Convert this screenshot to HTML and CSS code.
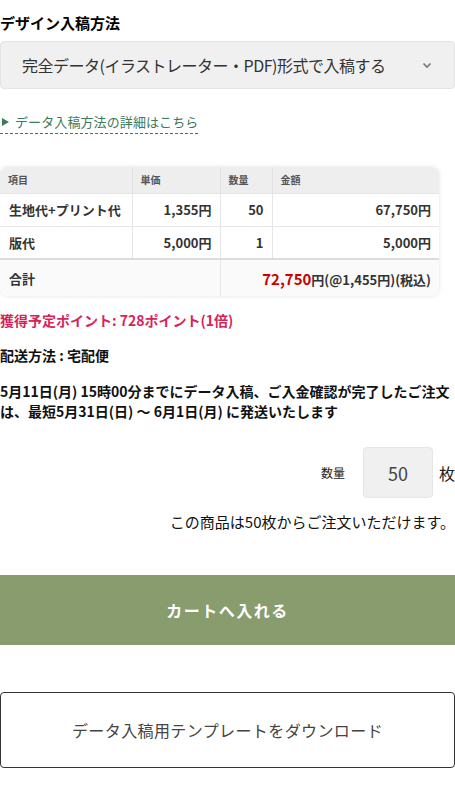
FILE: index.html
```html
<!DOCTYPE html>
<html lang="ja">
<head>
<meta charset="utf-8">
<link rel="stylesheet" href="styles.css">
</head>
<body>
<div class="page">
  <h2 class="title">デザイン入稿方法</h2>
  <div class="select">
    <span class="select-text">完全データ(イラストレーター・PDF)形式で入稿する</span>
    <svg class="chev" width="10" height="7" viewBox="0 0 10 7"><path d="M1.5 1.5 L5 5 L8.5 1.5" fill="none" stroke="#777" stroke-width="1.6"/></svg>
  </div>
  <a class="detail-link"><span class="tri"></span>データ入稿方法の詳細はこちら</a>

  <div class="table-wrap">
    <table class="price">
      <thead>
        <tr><th class="c1">項目</th><th class="c2">単価</th><th class="c3">数量</th><th class="c4">金額</th></tr>
      </thead>
      <tbody>
        <tr><td class="name">生地代+プリント代</td><td class="num">1,355円</td><td class="num">50</td><td class="num">67,750円</td></tr>
        <tr><td class="name">版代</td><td class="num">5,000円</td><td class="num">1</td><td class="num">5,000円</td></tr>
        <tr class="total"><td class="name" colspan="2">合計</td><td class="num" colspan="2"><span class="red">72,750</span>円(@1,455円)(税込)</td></tr>
      </tbody>
    </table>
  </div>

  <p class="points">獲得予定ポイント: 728ポイント(1倍)</p>
  <p class="info">配送方法 : 宅配便</p>
  <p class="info lines">5月11日(月) 15時00分までにデータ入稿、ご入金確認が完了したご注文は、最短5月31日(日) 〜 6月1日(月) に発送いたします</p>

  <div class="qty-row">
    <span class="qty-label">数量</span>
    <div class="qty-box">50</div>
    <span class="qty-unit">枚</span>
  </div>
  <p class="min-note">この商品は50枚からご注文いただけます。</p>

  <button class="cart">カートへ入れる</button>
  <button class="download">データ入稿用テンプレートをダウンロード</button>
</div>
</body>
</html>
```
FILE: styles.css
```css
* { box-sizing: border-box; }
html, body { margin: 0; padding: 0; background: #fff; }
body {
  font-family: "Noto Sans CJK JP", "Liberation Sans", sans-serif;
  color: #111;
  width: 455px;
}
.page { padding: 0; }
.title {
  margin: 0;
  padding-top: 12px;
  font-size: 15px;
  font-weight: 700;
  line-height: 22px;
  color: #000;
}
.select {
  margin-top: 7px;
  height: 48px;
  width: 455px;
  background: #f0f0f0;
  border: 1px solid #e4e4e4;
  border-radius: 4px;
  display: flex;
  align-items: center;
  justify-content: space-between;
  padding: 0 22px 0 21px;
}
.select-text { font-size: 16px; color: #333; letter-spacing: -0.5px; }
.chev { display: block; }
.detail-link {
  display: inline-flex;
  align-items: center;
  margin-top: 23px;
  color: #3c7a5a;
  font-size: 13px;
  line-height: 20px;
  padding-bottom: 1px;
  border-bottom: 1px dashed #3c7a5a;
  letter-spacing: 0.1px;
}
.tri {
  width: 0; height: 0;
  border-top: 4.5px solid transparent;
  border-bottom: 4.5px solid transparent;
  border-left: 7px solid #3c7a5a;
  margin: 0 6px 0 2px;
}
.table-wrap {
  margin-top: 33px;
  width: 439px;
  border-radius: 8px;
  overflow: hidden;
  box-shadow: 0 0 4px rgba(0,0,0,0.12);
}
.price {
  width: 100%;
  border-collapse: collapse;
  table-layout: fixed;
}
.price th {
  background: #eeeeee;
  font-size: 10px;
  font-weight: 700;
  color: #555;
  text-align: left;
  height: 26px;
  padding: 0 8px;
  border-right: 1px solid #e2e2e2;
}
.price th:last-child { border-right: none; }
.c1 { width: 132px; }
.c2 { width: 88px; }
.c3 { width: 52px; }
.price td {
  font-size: 13px;
  font-weight: 700;
  color: #333;
  height: 33px;
  padding: 0 8px;
  border-right: 1px solid #e6e6e6;
  border-top: 1px solid #e6e6e6;
}
.price td:last-child { border-right: none; }
.price td.num { text-align: right; }
.price td.name { padding-left: 9px; }
.price tr.total td {
  background: #fafafa;
  height: 37px;
  border-top: 2px solid #dcdcdc;
}
.red { color: #cc0000; font-size: 15px; }
.points {
  margin: 14px 0 0;
  color: #d6245a;
  font-size: 14px;
  font-weight: 700;
  line-height: 20px;
}
.info {
  margin: 15px 0 0;
  font-size: 14px;
  font-weight: 700;
  line-height: 20px;
  color: #111;
}
.lines { margin-top: 16px; }
.qty-row {
  margin-top: 26px;
  display: flex;
  justify-content: flex-end;
  align-items: center;
}
.qty-label { font-size: 12px; color: #222; margin-right: 18px; }
.qty-box {
  width: 70px;
  height: 51px;
  background: #f0f0f0;
  border: 1px solid #e6e6e6;
  border-radius: 4px;
  display: flex;
  align-items: center;
  justify-content: center;
  font-size: 18px;
  color: #444;
}
.qty-unit { font-size: 16px; color: #222; margin-left: 6px; }
.min-note {
  margin: 13px 0 0;
  text-align: right;
  font-size: 15px;
  line-height: 22px;
  color: #111;
}
.cart {
  display: block;
  margin-top: 42px;
  width: 455px;
  height: 70px;
  border: none;
  background: #889c6e;
  color: #fff;
  font-family: inherit;
  font-size: 16px;
  font-weight: 700;
  letter-spacing: 1.5px;
}
.download {
  display: block;
  margin-top: 47px;
  width: 455px;
  height: 76px;
  background: #fff;
  border: 1px solid #333;
  border-radius: 4px;
  color: #444;
  font-family: inherit;
  font-size: 16px;
  letter-spacing: 0.4px;
}
```
